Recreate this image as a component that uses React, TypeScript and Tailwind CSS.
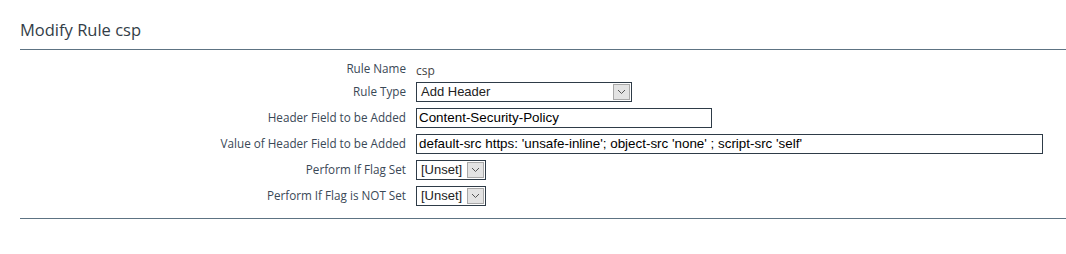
import React from "react";

type Row = {
  label: string;
  field: React.ReactNode;
  first?: boolean;
};

const Chevron = () => (
  <svg width="9" height="6" viewBox="0 0 9 6" fill="none">
    <path d="M1 1l3.5 3.5L8 1" stroke="#555" strokeWidth="1" />
  </svg>
);

const Select = ({ value, width }: { value: string; width: string }) => (
  <div
    className={`flex h-[20px] items-stretch border border-[#2e3b47] bg-white ${width}`}
  >
    <span className="flex-1 truncate pl-[4px] text-[13px] leading-[18px] text-[#222] [font-family:'Liberation_Sans',Arial,sans-serif]">
      {value}
    </span>
    <span className="m-[1px] flex w-[17px] items-center justify-center border border-[#a8a8a8] bg-[#e3e3e3]">
      <Chevron />
    </span>
  </div>
);

const TextInput = ({ value, width }: { value: string; width: string }) => (
  <div
    className={`flex h-[20px] items-center border border-[#2e3b47] bg-white pl-[2px] text-[13.4px] text-black [font-family:'Liberation_Sans',Arial,sans-serif] ${width}`}
  >
    {value}
  </div>
);

const rows: Row[] = [
  {
    label: "Rule Name",
    field: <span className="text-[12px] text-[#444]">csp</span>,
    first: true,
  },
  { label: "Rule Type", field: <Select value="Add Header" width="w-[216px]" /> },
  {
    label: "Header Field to be Added",
    field: <TextInput value="Content-Security-Policy" width="w-[296px]" />,
  },
  {
    label: "Value of Header Field to be Added",
    field: (
      <TextInput
        value="default-src https: 'unsafe-inline'; object-src 'none' ; script-src 'self'"
        width="w-[627px]"
      />
    ),
  },
  { label: "Perform If Flag Set", field: <Select value="[Unset]" width="w-[70px]" /> },
  {
    label: "Perform If Flag is NOT Set",
    field: <Select value="[Unset]" width="w-[70px]" />,
  },
];

export default function App() {
  return (
    <div className="h-[254px] w-[1066px] bg-white pl-[20px] pt-[20px] [font-family:'Open_Sans',sans-serif]">
      <h2 className="pb-[9px] text-[16.5px] leading-[20px] text-[#333d47]">
        Modify Rule csp
      </h2>
      <div className="border-t border-[#5d7383]" />
      <div className="flex flex-col gap-[6px] pt-[12px] pb-[12px]">
        {rows.map((r) => (
          <div
            key={r.label}
            className={`flex items-center ${r.first ? "h-[14px]" : "h-[20px]"}`}
          >
            <div className="w-[386px] text-right text-[11.7px] text-[#3a4856]">
              {r.label}
            </div>
            <div className="pl-[10px]">{r.field}</div>
          </div>
        ))}
      </div>
      <div className="border-t border-[#5d7383]" />
    </div>
  );
}
